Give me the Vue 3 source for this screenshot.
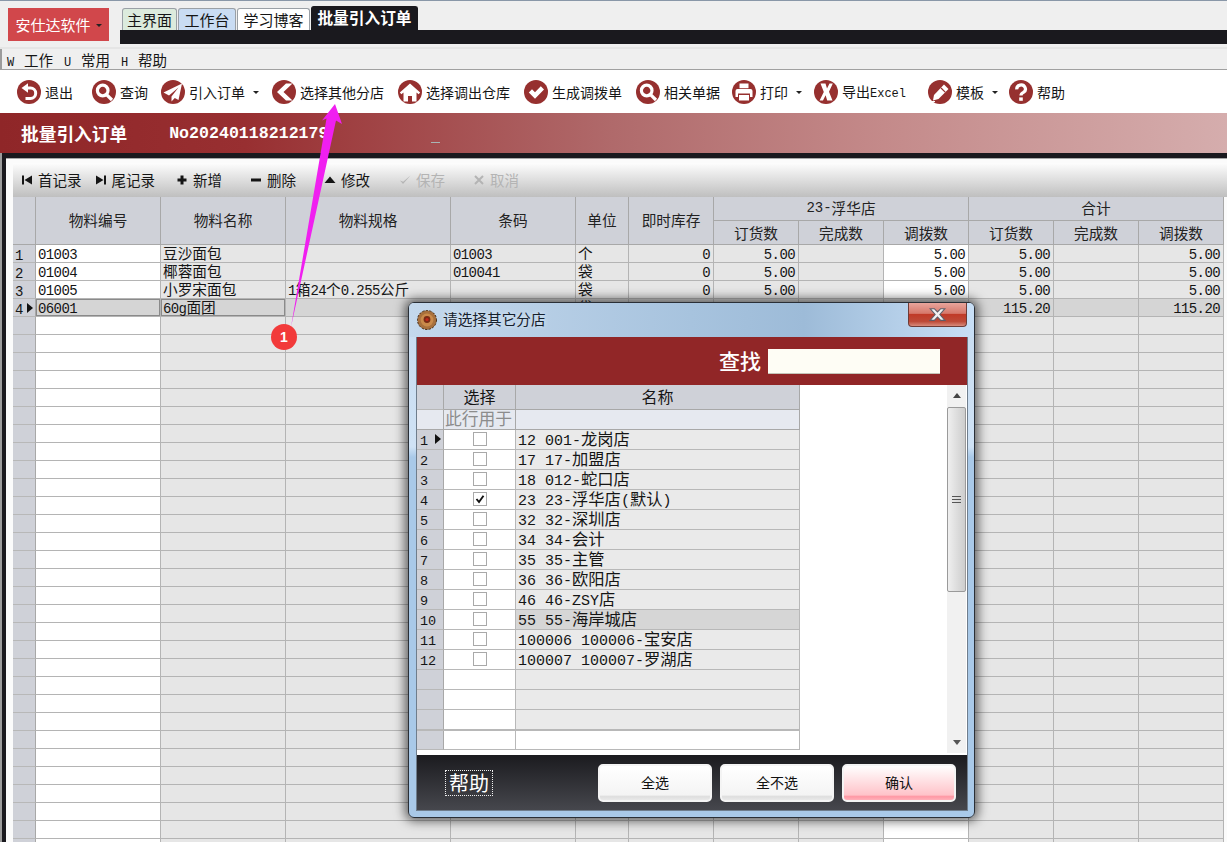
<script setup>
import { h } from 'vue'

const Tx = (props) =>
  String(props.t ?? '')
    .split(/([\x00-\x7f]+)/)
    .filter(Boolean)
    .map((s) => h('span', { class: /^[\x00-\x7f]/.test(s) ? 'asc' : 'cjk' }, s))
Tx.props = ['t']

const W = '#fff'
const icons = {
  back: [
    { d: 'M4.5 8 L11 3.2 V12.8Z', fill: W },
    { d: 'M10 8H13.5A5.2 5.2 0 0 1 13.5 18.4H8.5', stroke: W, sw: 3 },
  ],
  search: [
    { d: 'M16 10.5A5.3 5.3 0 1 1 5.4 10.5A5.3 5.3 0 1 1 16 10.5Z', stroke: W, sw: 3.2 },
    { d: 'M14.8 14.8L20 20', stroke: W, sw: 3.2 },
  ],
  plane: [{ d: 'M21 3.5L2.5 12.5L8 15.5L17.5 7.5L10.5 16.5V21.5L13.8 18L17.5 20Z', fill: W }],
  chevron: [{ d: 'M14 3.5L5 12L14 20.5H20.5L11.5 12L20.5 3.5Z', fill: W }],
  home: [
    { d: 'M12 3.5L1.8 12.6L3.4 14.3L5.5 12.4V21.5H10V16H14V21.5H18.5V12.4L20.6 14.3L22.2 12.6Z', fill: W },
  ],
  check: [{ d: 'M4.8 12.5L8 9.3L11 12.3L16.8 6.3L20 9.5L11 18.8Z', fill: W }],
  printer: [
    { d: 'M7.5 3.5H16.5V8.2H7.5Z', fill: W },
    { d: 'M3.5 11Q3.5 9 5.5 9H18.5Q20.5 9 20.5 11V17H18V13.5H6V17H3.5Z', fill: W },
    { d: 'M7 15H17V20.5H7Z', fill: W },
  ],
  excel: [{ d: 'M6.5 3.5H11.5L13 8.5L15.5 3.5H18.8L15 11.8L18.5 20.5H13.2L11.6 15.2L9 20.5H5.6L9.8 12Z', fill: W }],
  eraser: [
    { d: 'M16 4.5L20.5 9L10.5 19L5 20.5L6 15Z', fill: W },
    { d: 'M13 8L17.2 12.2', stroke: '#96302f', sw: 1.2 },
    { d: 'M3 21.5H7', stroke: W, sw: 1 },
  ],
  help: [
    { d: 'M7.8 9.4A4.3 4 0 1 1 14.4 12.4Q12 13.6 12 15.6', stroke: W, sw: 3.2 },
    { d: 'M10.2 17.4H13.8V20.8H10.2Z', fill: W },
  ],
}

const tools = [
  { icon: 'back', text: '退出', ml: 17 },
  { icon: 'search', text: '查询', ml: 19 },
  { icon: 'plane', text: '引入订单', ml: 13, caret: true },
  { icon: 'chevron', text: '选择其他分店', ml: 13 },
  { icon: 'home', text: '选择调出仓库', ml: 14 },
  { icon: 'check', text: '生成调拨单', ml: 14 },
  { icon: 'search', text: '相关单据', ml: 14 },
  { icon: 'printer', text: '打印', ml: 12, caret: true },
  { icon: 'excel', text: '导出Excel', ml: 12 },
  { icon: 'eraser', text: '模板', ml: 22, caret: true },
  { icon: 'help', text: '帮助', ml: 11 },
]

const navs = [
  { key: 'first', d: 'M1 1.5H3V10.5H1ZM11 1.5V10.5L3.5 6Z', text: '首记录', ml: 8 },
  { key: 'last', d: 'M1 1.5V10.5L8.5 6ZM9 1.5H11V10.5H9Z', text: '尾记录', ml: 13 },
  { key: 'add', d: 'M4.5 1.5H7.5V4.5H10.5V7.5H7.5V10.5H4.5V7.5H1.5V4.5H4.5Z', text: '新增', ml: 21 },
  { key: 'del', d: 'M1 4.5H11V7.5H1Z', text: '删除', ml: 28 },
  { key: 'edit', d: 'M6 2.5L11.5 9H0.5Z', text: '修改', ml: 28 },
  { key: 'save', d: 'M1 6.5L4 10L11.5 1.5L4.2 7.8Z', text: '保存', ml: 29, off: true },
  { key: 'cancel', d: 'M2 2L10 10M10 2L2 10', text: '取消', ml: 28, off: true, line: true },
]

const colWidths = [125, 125, 165, 125, 53, 85, 85, 85, 85, 85, 85, 85]
const filled = [
  ['01003', '豆沙面包', '', '01003', '个', '0', '5.00', '', '5.00', '5.00', '', '5.00'],
  ['01004', '椰蓉面包', '', '010041', '袋', '0', '5.00', '', '5.00', '5.00', '', '5.00'],
  ['01005', '小罗宋面包', '1箱24个0.255公斤', '', '袋', '0', '5.00', '', '5.00', '5.00', '', '5.00'],
  ['06001', '60g面团', '', '', '袋', '0', '115.20', '', '115.20', '115.20', '', '115.20'],
]
const rows = Array.from({ length: 34 }, (_, i) => filled[i] || Array(12).fill(''))
const rightCols = [5, 6, 7, 8, 9, 10, 11]

const shops = [
  '12 001-龙岗店', '17 17-加盟店', '18 012-蛇口店', '23 23-浮华店(默认)',
  '32 32-深圳店', '34 34-会计', '35 35-主管', '36 36-欧阳店',
  '46 46-ZSY店', '55 55-海岸城店', '100006 100006-宝安店', '100007 100007-罗湖店',
  '', '', '',
]
</script>

<template>
  <div class="page">
    <header class="top">
      <div class="brand">安仕达软件<i class="caret brand-caret"></i></div>
      <div class="tabs-wrap">
        <div class="tabs">
          <div class="tab t-green">主界面</div>
          <div class="tab t-blue">工作台</div>
          <div class="tab t-white">学习博客</div>
          <div class="tab t-active">批量引入订单</div>
        </div>
        <div class="tabs-bar"></div>
      </div>
    </header>

    <div class="shell">
      <nav class="menu">
        <div class="menu-item"><span class="key">W</span><span>工作</span></div>
        <div class="menu-item"><span class="key">U</span><span>常用</span></div>
        <div class="menu-item"><span class="key">H</span><span>帮助</span></div>
      </nav>

      <div class="toolbar">
        <div v-for="t in tools" :key="t.text" class="tool" :style="{ marginLeft: t.ml + 'px' }">
          <svg class="ico" viewBox="0 0 24 24" width="24" height="24">
            <circle cx="12" cy="12" r="12" fill="#96302f" />
            <path
              v-for="(p, n) in icons[t.icon]"
              :key="n"
              :d="p.d"
              :fill="p.fill || 'none'"
              :stroke="p.stroke || 'none'"
              :stroke-width="p.sw || 0"
            />
          </svg>
          <span class="tool-text"><Tx :t="t.text" /></span>
          <i v-if="t.caret" class="caret tool-caret"></i>
        </div>
      </div>

      <div class="band">
        <span class="band-title">批量引入订单</span>
        <span class="band-no">No20240118212179</span>
        <span class="band-dash"></span>
      </div>

      <main class="work">
        <div class="nav">
          <div v-for="n in navs" :key="n.key" class="nav-btn" :class="{ off: n.off }" :style="{ marginLeft: n.ml + 'px' }">
            <svg viewBox="0 0 12 12" width="12" height="12">
              <path v-if="n.line" :d="n.d" fill="none" stroke="currentColor" stroke-width="2" />
              <path v-else :d="n.d" fill="currentColor" />
            </svg>
            <span class="nav-text">{{ n.text }}</span>
          </div>
        </div>

        <div class="grid">
          <div class="head">
            <div class="hc h-gutter"></div>
            <div class="hc h-tall c1">物料编号</div>
            <div class="hc h-tall c2">物料名称</div>
            <div class="hc h-tall c3">物料规格</div>
            <div class="hc h-tall c4">条码</div>
            <div class="hc h-tall c5">单位</div>
            <div class="hc h-tall c6">即时库存</div>
            <div class="hc h-group g1"><Tx t="23-浮华店" /></div>
            <div class="hc h-group g2">合计</div>
            <div class="hc">订货数</div>
            <div class="hc">完成数</div>
            <div class="hc">调拨数</div>
            <div class="hc">订货数</div>
            <div class="hc">完成数</div>
            <div class="hc">调拨数</div>
          </div>
          <div v-for="(r, i) in rows" :key="i" class="row" :class="{ current: i === 3 }">
            <div class="gutter">
              <span class="asc">{{ i < 4 ? i + 1 : '' }}</span>
              <i v-if="i === 3" class="marker"></i>
            </div>
            <div
              v-for="(c, j) in r"
              :key="j"
              class="cell"
              :class="{
                white: j === 0 || j === 8,
                right: rightCols.includes(j),
                focus: i === 3 && j < 2,
              }"
              :style="{ width: colWidths[j] + 'px' }"
            ><Tx :t="c" /></div>
          </div>
        </div>
      </main>
    </div>

    <section class="dlg">
      <div class="dlg-title">
        <svg class="cookie" viewBox="0 0 20 20" width="20" height="20">
          <circle cx="10" cy="10" r="9.5" fill="#a8703c" stroke="#4a2c14" stroke-width="1" stroke-dasharray="2.4 1.2" />
          <circle cx="10" cy="10" r="6.4" fill="#c98a4a" />
          <circle cx="10" cy="9.5" r="3.4" fill="#7a2a14" />
          <circle cx="10" cy="9.5" r="1.6" fill="#c2261a" />
        </svg>
        <span class="dlg-title-text">请选择其它分店</span>
        <div class="close">
          <svg viewBox="0 0 16 12" width="17" height="13">
            <path d="M1 0.5H5L8 3.6L11 0.5H15L10.2 6L15 11.5H11L8 8.3L5 11.5H1L5.8 6Z" fill="#f1f1f1" stroke="#5d5d68" stroke-width="1" />
          </svg>
        </div>
      </div>

      <div class="dlg-body">
        <div class="search">
          <span class="search-label">查找</span>
          <div class="search-input"></div>
        </div>

        <div class="picker">
          <div class="list">
            <div class="lrow lhead">
              <div class="lg"></div>
              <div class="lc ls">选择</div>
              <div class="lc ln">名称</div>
            </div>
            <div class="lrow lfilter">
              <div class="lg"></div>
              <div class="lc ls clip">此行用于</div>
              <div class="lc ln"></div>
            </div>
            <div v-for="(s, i) in shops" :key="i" class="lrow ldata">
              <div class="lg">
                <span class="asc">{{ s ? i + 1 : '' }}</span>
                <i v-if="i === 0" class="marker lmarker"></i>
              </div>
              <div class="lc ls white">
                <span v-if="s" class="box">
                  <svg v-if="i === 3" viewBox="0 0 12 12" width="12" height="12">
                    <path d="M2.5 6L5 9L9.5 2.8" fill="none" stroke="#111" stroke-width="1.9" />
                  </svg>
                </span>
              </div>
              <div class="lc ln lname" :class="{ picked: i === 9 }"><Tx :t="s" /></div>
            </div>
            <div class="lrow lfoot">
              <div class="lg"></div>
              <div class="lc ls white"></div>
              <div class="lc ln white"></div>
            </div>
          </div>

          <div class="free"></div>

          <div class="scroll">
            <i class="arrow-up"></i>
            <div class="thumb"><span></span><span></span><span></span></div>
            <i class="arrow-down"></i>
          </div>
        </div>

        <footer class="dlg-foot">
          <div class="help">帮助</div>
          <button class="btn">全选</button>
          <button class="btn">全不选</button>
          <button class="btn ok">确认</button>
        </footer>
      </div>
    </section>

    <svg class="pointer" viewBox="0 0 1227 842" width="1227" height="842">
      <path d="M335 104L342 124L336 120.5L291 327L326.5 118.5L322 120.5Z" fill="#f01ff0" />
    </svg>
    <div class="badge">1</div>
  </div>
</template>

<style>
html, body { margin: 0; background: #efefef; }
.asc { font-family: "Liberation Mono", monospace; font-size: 14px; letter-spacing: -.6px; white-space: pre; }
.cjk { white-space: pre; }
.dlg .asc { font-size: 15px; letter-spacing: 0; }
.dlg .lg .asc { font-size: 13.5px; }
.gutter .asc { letter-spacing: 0; }
.tool-text .asc { font-size: 12px; letter-spacing: 0; }
.hc .asc { letter-spacing: 0; }
</style>

<style scoped>
* { box-sizing: border-box; }
.page {
  position: relative;
  width: 1227px;
  height: 842px;
  overflow: hidden;
  background: #efefef;
  color: #151515;
  font-family: "Noto Sans CJK SC", sans-serif;
  font-size: 14px;
}

/* top */
.top {
  display: flex;
  height: 49px;
  padding: 7px 0 0 8px;
  border-top: 1px solid #8997a8;
  border-bottom: 2px solid #e5e5e5;
}
.brand {
  display: flex;
  align-items: center;
  justify-content: center;
  width: 101px;
  height: 33px;
  background: #d1474b;
  color: #fff;
  font-size: 15px;
}
.caret {
  display: block;
  width: 0;
  height: 0;
  border-left: 3px solid transparent;
  border-right: 3px solid transparent;
  border-top: 3px solid #222;
}
.brand-caret { margin: 2px 0 0 5px; }
.tabs-wrap { flex: 1; margin-left: 11px; }
.tabs { display: flex; align-items: flex-end; gap: 1px; height: 22px; padding-left: 2px; }
.tab {
  display: flex;
  align-items: center;
  justify-content: center;
  height: 22px;
  border: 1px solid #9aa0a6;
  border-bottom: 0;
  border-radius: 3px 3px 0 0;
  font-size: 15px;
  padding-bottom: 1px;
}
.t-green { width: 55px; background: #dcebdd; }
.t-blue { width: 58px; background: #c9dcf3; }
.t-white { width: 73px; background: #fff; }
.t-active {
  width: 107px;
  height: 24px;
  padding-bottom: 3px;
  background: #1a191e;
  border-color: #1a191e;
  color: #fff;
  font-size: 15.7px;
  font-weight: 700;
}
.tabs-bar { height: 14px; background: #1a191e; }

/* shell */
.shell { height: 793px; border-left: 2px solid #9c9c9c; }
.menu { display: flex; align-items: baseline; height: 20px; padding-left: 5px; }
.menu-item { display: flex; align-items: baseline; gap: 10px; margin-right: 11px; font-size: 14.5px; line-height: 22px; }
.key { width: 7px; font-family: "Liberation Mono", monospace; font-size: 12px; }
.toolbar {
  display: flex;
  align-items: center;
  height: 44px;
  margin-left: -2px;
  padding-top: 1px;
  background: #fff;
  border-top: 1px solid #a0a0a0;
}
.tool { display: flex; align-items: center; gap: 4px; }
.ico { flex: none; }
.tool-text { font-size: 14px; line-height: 20px; }
.tool-caret { margin-left: 4px; }
.band {
  display: flex;
  align-items: center;
  height: 40px;
  margin-left: -2px;
  padding-left: 21px;
  background: linear-gradient(90deg, #8f2628 0%, #982f31 20%, #b06a6b 50%, #c48a8a 72%, #d5adad 100%);
  color: #fff;
}
.band-title { font-size: 17.7px; font-weight: 700; }
.band-no { margin-left: 42px; font: 700 16.6px "Liberation Mono", monospace; }
.band-dash { width: 9px; height: 1px; margin: 18px 0 0 103px; background: #a9b4b4; }

/* work */
.work {
  height: 689px;
  padding: 5px 0 0 11px;
  background: #fbfbfb;
  border-top: 5px solid #1a191e;
  border-left: 4px solid #1a191e;
  box-shadow: inset 0 1px 0 #a8a8a8;
}
.nav {
  display: flex;
  align-items: center;
  height: 34px;
  margin-left: -4px;
  background: linear-gradient(#fdfdfd, #bfbfbf);
}
.nav-btn { display: flex; align-items: center; gap: 5px; font-size: 14.5px; }
.nav-btn svg { flex: none; }
.nav-text { margin-top: -2px; }
.off { color: #b4b4b4; }
.grid { margin-left: -4px; width: 1211px; }
.head {
  display: grid;
  grid-template-columns: 23px 125px 125px 165px 125px 53px 85px 85px 85px 85px 85px 85px 85px;
  grid-template-rows: 24px 24px;
}
.hc {
  display: flex;
  align-items: center;
  justify-content: center;
  background: #cfd1d8;
  border-right: 1px solid #a8a8a8;
  border-bottom: 1px solid #a8a8a8;
  font-size: 14.67px;
  color: #222;
}
.h-gutter { grid-row: 1 / 3; }
.h-tall { grid-row: 1 / 3; padding-bottom: 3px; }
.h-group { padding-bottom: 2px; }
.c1 { grid-column: 2; } .c2 { grid-column: 3; } .c3 { grid-column: 4; }
.c4 { grid-column: 5; } .c5 { grid-column: 6; } .c6 { grid-column: 7; }
.g1 { grid-column: 8 / 11; }
.g2 { grid-column: 11 / 14; }
.row { display: flex; height: 18px; }
.gutter {
  position: relative;
  flex: none;
  width: 23px;
  padding: 1px 0 0 2px;
  background: #cfd1d8;
  border-right: 1px solid #a8a8a8;
  border-bottom: 1px solid #b8b8b8;
  font-size: 14.5px;
  line-height: 16px;
}
.marker {
  position: absolute;
  left: 14px;
  top: 4px;
  width: 0;
  height: 0;
  border-top: 5px solid transparent;
  border-bottom: 5px solid transparent;
  border-left: 6px solid #111;
}
.cell {
  flex: none;
  padding: 0 2px;
  background: #e6e6e6;
  border-right: 1px solid #b4b4b4;
  border-bottom: 1px solid #b4b4b4;
  font-size: 14.67px;
  line-height: 16px;
  white-space: nowrap;
}
.cell.white { background: #fff; }
.cell.right { padding-right: 3px; text-align: right; }
.row.current .cell { background: #d5d5d5; }
.cell.focus { box-shadow: inset 0 0 0 1px #8a8a8a; }

/* dialog */
.dlg {
  position: absolute;
  left: 408px;
  top: 302px;
  display: flex;
  flex-direction: column;
  width: 567px;
  height: 516px;
  padding: 0 7px 7px 8px;
  border: 1px solid #2a2f36;
  border-radius: 6px;
  background: linear-gradient(#c8dcf0 0%, #cfe2f5 28%, #a9c9e8 30%, #a9c9e8 100%);
  box-shadow: 0 0 11px 3px rgba(0, 0, 0, .6);
}
.dlg-title {
  position: relative;
  display: flex;
  flex: none;
  align-items: center;
  height: 34px;
  margin: 0 -7px 0 -8px;
  padding: 0 0 0 8px;
  border-radius: 5px 5px 0 0;
  background: linear-gradient(90deg, #c4d8ec 0%, #a7c3de 50%, #9dbbd8 70%, #c8dff6 100%);
}
.cookie { flex: none; }
.dlg-title-text { margin: -3px 0 0 6px; font-size: 14.67px; color: #15202c; text-shadow: 0 0 4px #e9f2fb; }
.close {
  position: absolute;
  top: 0;
  right: 7px;
  display: flex;
  align-items: center;
  justify-content: center;
  width: 59px;
  height: 24px;
  border: 1px solid #6e3b36;
  border-top: 0;
  border-radius: 0 0 4px 4px;
  background: linear-gradient(#e8a59c 0%, #d6786b 45%, #c03a28 50%, #bd4a38 80%, #d88b7c 100%);
}
.dlg-body {
  display: flex;
  flex: 1;
  flex-direction: column;
  min-height: 0;
  background: #fff;
  box-shadow: 0 0 0 1px #6f7d8c;
}
.search {
  display: flex;
  flex: none;
  align-items: center;
  justify-content: flex-end;
  height: 48px;
  padding-right: 27px;
  background: #912627;
}
.search-label { margin: -2px 7px 0 0; color: #fff; font-size: 21px; font-weight: 500; }
.search-input { width: 172px; height: 25px; background: #fefdf5; border-bottom: 1px solid #c4c4b8; }
.picker { display: flex; flex: none; height: 368px; }
.list { flex: none; width: 383px; }
.lrow { display: flex; }
.lg {
  position: relative;
  flex: none;
  width: 27px;
  padding-left: 3px;
  background: #cfd1d8;
  border-right: 1px solid #a8a8a8;
  border-bottom: 1px solid #b8b8b8;
  font-size: 14px;
  line-height: 18px;
}
.lc { border-right: 1px solid #b8b8b8; border-bottom: 1px solid #b8b8b8; }
.ls { display: flex; flex: none; align-items: center; justify-content: center; width: 72px; }
.ln { flex: none; width: 284px; }
.lhead { height: 25px; }
.lhead .lc {
  display: flex;
  align-items: center;
  justify-content: center;
  padding-bottom: 3px;
  background: #cfd1d8;
  border-color: #a8a8a8;
  font-size: 16px;
}
.lfilter { height: 20px; }
.lfilter .lg, .lfilter .lc { background: #e6e9f0; border-color: #a8a8a8; }
.clip { justify-content: flex-start; padding: 0 0 2px 1px; color: #8c8c8c; font-size: 16.8px; line-height: 17px; white-space: nowrap; }
.ldata { height: 20px; }
.white { background: #fff; }
.lname { padding-left: 2px; background: #eaeaea; font-size: 16.3px; line-height: 17px; white-space: pre; }
.lname.picked { background: #d6d6d6; }
.box { display: flex; align-items: center; justify-content: center; width: 14px; height: 14px; margin-top: -2px; background: #fff; border: 1px solid #a9a9a9; }
.lmarker { left: 18px; top: 4px; }
.lfoot { height: 21px; border-top: 2px solid #b8b8b8; margin-top: -1px; }
.free { flex: 1; background: #fff; }
.scroll {
  position: relative;
  display: flex;
  flex: none;
  flex-direction: column;
  align-items: center;
  width: 19px;
  margin-right: 1px;
  background: #f1f1f1;
}
.arrow-up, .arrow-down { position: absolute; width: 0; height: 0; border-left: 4px solid transparent; border-right: 4px solid transparent; }
.arrow-up { top: 8px; border-bottom: 5px solid #444; }
.arrow-down { bottom: 8px; border-top: 5px solid #555; }
.thumb {
  display: flex;
  flex-direction: column;
  align-items: center;
  justify-content: center;
  gap: 2px;
  width: 19px;
  height: 185px;
  margin-top: 22px;
  border: 1px solid #9a9a9a;
  border-radius: 2px;
  background: linear-gradient(90deg, #efefef, #dcdcdc 55%, #cdcdcd);
}
.thumb span { width: 9px; height: 1px; background: #555; }
.dlg-foot {
  display: flex;
  flex: none;
  align-items: center;
  height: 57px;
  padding: 0 11px 0 28px;
  background: linear-gradient(#1b1b1f, #46474d);
  border-top: 2px solid #fff;
}
.help {
  width: 48px;
  height: 26px;
  margin-right: auto;
  color: #fff;
  border: 1px dotted #eee;
  font-size: 20px;
  line-height: 24px;
  text-align: center;
}
.btn {
  width: 114px;
  height: 38px;
  margin-left: 8px;
  padding: 0 0 1px;
  border: 2px solid #f4f4f4;
  border-radius: 5px;
  background: linear-gradient(#fff 0%, #f4f4f4 85%, #dedede 90%, #e9e9e9 100%);
  color: #111;
  font-family: inherit;
  font-size: 14px;
}
.btn.ok { background: linear-gradient(#fff 0%, #ffc3c9 85%, #ff98a4 90%, #ffb0b9 100%); }

/* annotation */
.pointer { position: absolute; left: 0; top: 0; pointer-events: none; }
.badge {
  position: absolute;
  left: 271px;
  top: 324px;
  display: flex;
  align-items: center;
  justify-content: center;
  width: 26px;
  height: 26px;
  border-radius: 50%;
  background: #f23a3a;
  color: #fff;
  font: 700 14px "Liberation Sans", sans-serif;
}
</style>
